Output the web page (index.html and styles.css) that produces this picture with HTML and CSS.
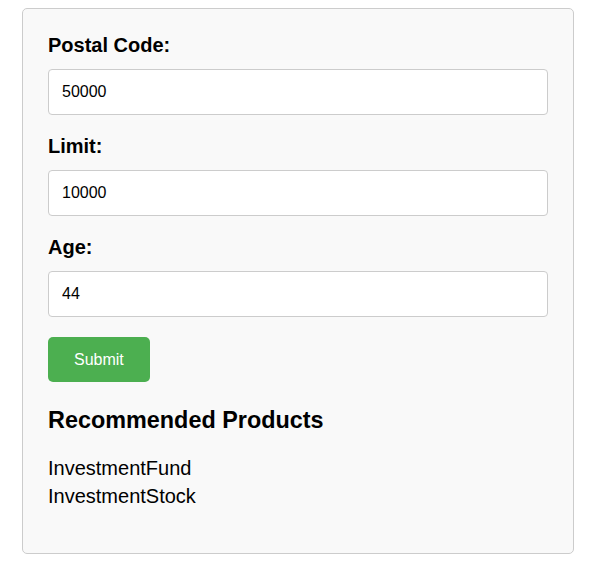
FILE: index.html
```html
<!DOCTYPE html>
<html>
<head>
<meta charset="utf-8">
<link rel="stylesheet" href="styles.css">
</head>
<body>
<div class="card">
  <form class="form">
    <label class="label" for="postal">Postal Code:</label>
    <input class="field" id="postal" type="text" value="50000">
    <label class="label" for="limit">Limit:</label>
    <input class="field" id="limit" type="text" value="10000">
    <label class="label" for="age">Age:</label>
    <input class="field" id="age" type="text" value="44">
    <button class="submit" type="button">Submit</button>
  </form>
  <h3 class="heading">Recommended Products</h3>
  <ul class="products">
    <li>InvestmentFund</li>
    <li>InvestmentStock</li>
  </ul>
</div>
</body>
</html>
```
FILE: styles.css
```css
body {
  margin: 8px;
  font-family: "Liberation Sans", Arial, sans-serif;
  font-size: 20px;
  color: #000;
  background: #fff;
}
.card {
  width: 500px;
  margin: 0 14px;
  padding: 25px;
  background: #f9f9f9;
  border: 1px solid #cccccc;
  border-radius: 5px;
}
.form {
  margin: 0;
  display: flex;
  flex-direction: column;
  align-items: flex-start;
}
.label {
  display: block;
  font-weight: bold;
  font-size: 20px;
  line-height: 23px;
  margin-bottom: 12px;
}
.field {
  box-sizing: border-box;
  width: 500px;
  height: 46px;
  padding: 13px;
  margin: 0 0 20px 0;
  border: 1px solid #cccccc;
  border-radius: 4px;
  background: #fff;
  font-family: "Liberation Sans", Arial, sans-serif;
  font-size: 16px;
  color: #000;
}
.submit {
  box-sizing: border-box;
  height: 45px;
  padding: 0 26px;
  border: none;
  border-radius: 5px;
  background: #4caf50;
  color: #fff;
  font-family: "Liberation Sans", Arial, sans-serif;
  font-size: 16px;
  line-height: 19px;
}
.heading {
  font-size: 1.17em;
  font-weight: bold;
  margin: 25px 0 20px 0;
}
.products {
  list-style: none;
  margin: 0 0 18px 0;
  padding: 0;
  line-height: 28px;
}
```
